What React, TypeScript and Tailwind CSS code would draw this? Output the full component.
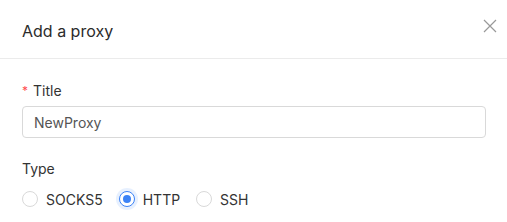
import React from "react";

export default function App() {
  const font = { fontFamily: "Inter, 'Noto Sans', sans-serif" };
  return (
    <div className="w-[507px] h-[222px] bg-white overflow-hidden text-[#333]" style={font}>
      <div className="h-[59px] flex items-center justify-between pl-[22px] pr-[5px] border-b border-[#ebebeb]">
        <div className="text-[16px] leading-[22px] text-[#2b2b2b] pt-[4px]">Add a proxy</div>
        <button className="w-[24px] h-[24px] flex items-center justify-center text-[#999] mb-[6px]">
          <svg width="14" height="14" viewBox="0 0 14 14" fill="none" stroke="currentColor" strokeWidth="1.2">
            <path d="M1 1L13 13M13 1L1 13" />
          </svg>
        </button>
      </div>
      <div className="px-[22px] pr-[21px] pt-[22px]">
        <div className="flex items-center h-[20px] text-[14px] leading-[20px] text-[#333] mb-[5px]">
          <span className="text-[#ff4d4f] text-[12px] mr-[5px] leading-none">*</span>
          <span>Title</span>
        </div>
        <div className="h-[32px] border border-[#d9d9d9] rounded-[4px] flex items-center px-[11px] text-[14px] text-[#555]">
          NewProxy
        </div>
        <div className="mt-[21px] h-[20px] text-[14px] leading-[20px] text-[#333] mb-[10px]">Type</div>
        <div className="flex items-center h-[20px] text-[14px] text-[#333]">
          <label className="flex items-center mr-[16px]">
            <span className="w-[16px] h-[16px] rounded-full border border-[#d9d9d9] bg-white" />
            <span className="ml-[8px]">SOCKS5</span>
          </label>
          <label className="flex items-center mr-[16px]">
            <span className="w-[16px] h-[16px] rounded-full border border-[#3b82f6] bg-white flex items-center justify-center shadow-[0_0_0_3px_rgba(59,130,246,0.12)]">
              <span className="w-[8px] h-[8px] rounded-full bg-[#3b82f6]" />
            </span>
            <span className="ml-[8px]">HTTP</span>
          </label>
          <label className="flex items-center">
            <span className="w-[16px] h-[16px] rounded-full border border-[#d9d9d9] bg-white" />
            <span className="ml-[8px]">SSH</span>
          </label>
        </div>
      </div>
    </div>
  );
}
